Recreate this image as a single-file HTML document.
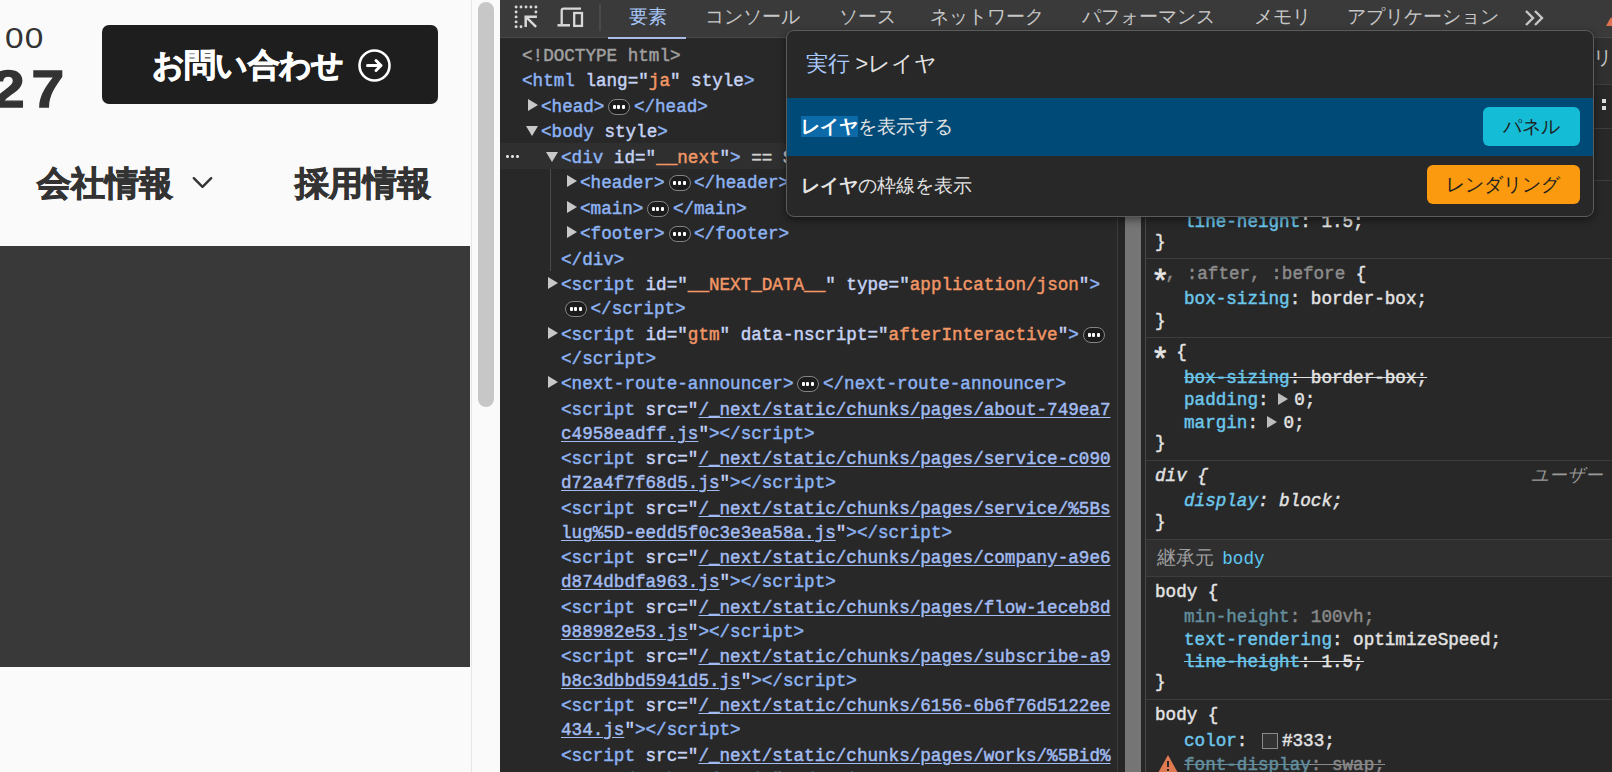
<!DOCTYPE html>
<html lang="ja">
<head>
<meta charset="utf-8">
<style>
*{margin:0;padding:0;box-sizing:border-box}
html,body{width:1612px;height:772px;overflow:hidden;background:#282828;font-family:"Liberation Sans",sans-serif}
.abs{position:absolute}
#page{position:absolute;left:0;top:0;width:471px;height:772px;background:#fafafa;overflow:hidden}
#n00{position:absolute;left:5px;top:21px;font-size:29px;line-height:34px;color:#333;transform:scaleX(1.15);transform-origin:0 0;letter-spacing:1px}
#n27{position:absolute;left:-8px;top:61px;font-size:51px;line-height:58px;color:#333;font-weight:bold;transform:scaleX(1.15);transform-origin:0 0;letter-spacing:6px;-webkit-text-stroke:1.3px #333}
#btn{position:absolute;left:102px;top:25px;width:336px;height:79px;background:#1e1e1e;border-radius:7px}
#btntxt{position:absolute;left:50px;top:20px;font-size:31.5px;letter-spacing:-0.8px;line-height:40px;color:#fff;font-weight:bold;white-space:nowrap;-webkit-text-stroke:0.9px #fff}
#btnico{position:absolute;left:255.5px;top:24px;width:33px;height:33px}
.nav{position:absolute;top:162px;font-size:34px;line-height:42px;color:#333;font-weight:bold;white-space:nowrap;-webkit-text-stroke:0.9px #333}
#dark{position:absolute;left:0;top:246px;width:470px;height:421px;background:#393939}
#track{position:absolute;left:471px;top:0;width:29px;height:772px;background:#fafafa;border-left:1px solid #e6e6e6}
#thumb{position:absolute;left:478px;top:2px;width:16px;height:405px;background:#c7c7c7;border-radius:8px}
#dt{position:absolute;left:500px;top:0;width:1112px;height:772px;background:#282828;overflow:hidden}
#tb{position:absolute;left:500px;top:0;width:1112px;height:38px;background:#3a3a3a;border-bottom:1.5px solid #474747}
.tab{position:absolute;top:4px;font-size:19px;line-height:26px;color:#c7c7c7;white-space:nowrap}
#seltab{position:absolute;left:608px;top:36.5px;width:78px;height:2px;background:#a9bde6}
.row{position:absolute;height:24px;font-family:"Liberation Mono",monospace;font-size:17.63px;line-height:24px;white-space:pre;color:#e3e3e3;-webkit-text-stroke-width:0.45px}
.t{color:#8db3f3}
.a{color:#c6d3f4}
.v{color:#f29766}
.lk{color:#a2bcf2;text-decoration:underline;text-underline-offset:2px}
.g{color:#a0a0a0}.eq{color:#d0d0d0}
.p{color:#6cc6ea}
.w{color:#e3e3e3}
.dim{color:#8c8c8c}
.pd{color:#638f9e}
.wd{color:#8a8a8a}
.st{text-decoration:line-through}
.st span{text-decoration:line-through}
.it{font-style:italic}.ast{display:inline-block;transform:translate(0px,9.5px) scale(1.75)}
.sp{display:inline-block;width:15px}.sp2{display:inline-block;width:24px}
.bd{display:inline-block;position:relative;top:3.7px;width:22px;height:16px;border:1px solid #858585;border-radius:8px;background:#1c1c1c;vertical-align:top;margin:0 3.5px 0 4px}
.bd i{position:absolute;top:5.5px;width:3px;height:3.5px;background:#fff;border-radius:1px}
.bd i:nth-child(1){left:3.8px}.bd i:nth-child(2){left:8px}.bd i:nth-child(3){left:13px}
.tri-r{position:absolute;width:0;height:0;border-top:6px solid transparent;border-bottom:6px solid transparent;border-left:10px solid #c8c8c8}
.tri-d{position:absolute;width:0;height:0;border-left:6px solid transparent;border-right:6px solid transparent;border-top:10px solid #c8c8c8}
#selrow{position:absolute;left:500px;top:143px;width:617px;height:26px;background:#2f2f2f}
#guide{position:absolute;left:550px;top:169px;width:1px;height:102px;background:#4a4a4a}
#vsb{position:absolute;left:1117px;top:38px;width:29px;height:734px;background:#262626;border-left:1px solid #3c3c3c;border-right:1px solid #484848}
#vthumb{position:absolute;left:1125px;top:38px;width:16px;height:734px;background:#757575}
#sty{position:absolute;left:1146px;top:38px;width:466px;height:734px;background:#282828}
.sep{position:absolute;left:1146px;width:466px;height:1px;background:#3d3d3d}
#inh{position:absolute;left:1146px;top:540px;width:466px;height:36px;background:#2f2f2f}
#menu{position:absolute;left:785.5px;top:30px;width:808.5px;height:187px;background:#282828;border:1.5px solid #5c5c5c;border-radius:8px;box-shadow:0 3px 8px rgba(0,0,0,.45);overflow:hidden}
#mhead{position:absolute;left:19px;top:18px;font-size:21.6px;line-height:30px;color:#e3e3e3;white-space:nowrap}
#msel{position:absolute;left:0;top:67px;width:806px;height:58px;background:#004a77}
.mtxt{position:absolute;left:14px;font-size:19px;line-height:26px;color:#e3e3e3;white-space:nowrap}
.hl{background:#0d6aa8;font-weight:bold;color:#fff}
.badge{position:absolute;font-size:19px;line-height:39px;height:39px;border-radius:6px;text-align:center;color:#1f1f1f;white-space:nowrap}
</style>
</head>
<body>
<div id="page">
  <div id="n00">00</div>
  <div id="n27">27</div>
  <div id="btn">
    <div id="btntxt">お問い合わせ</div>
    <svg id="btnico" viewBox="0 0 33 33"><circle cx="16.5" cy="16.5" r="15" fill="none" stroke="#fff" stroke-width="2.6"/><path d="M9.5 16.5h13.5M18 11.5l5 5-5 5" fill="none" stroke="#fff" stroke-width="3" stroke-linecap="round" stroke-linejoin="round"/></svg>
  </div>
  <div class="nav" style="left:37px">会社情報</div>
  <svg class="abs" style="left:192px;top:176px" width="21" height="14" viewBox="0 0 21 14"><path d="M1.8 2.2l8.7 8.7 8.7-8.7" fill="none" stroke="#333" stroke-width="2.4" stroke-linecap="round" stroke-linejoin="round"/></svg>
  <div class="nav" style="left:295px">採用情報</div>
  <div id="dark"></div>
</div>
<div id="track"></div>
<div id="thumb"></div>
<div id="dt"></div>
<div id="tb"></div>
<svg class="abs" style="left:508px;top:0px" width="84" height="36" viewBox="0 0 84 36">
  <g fill="#d8d8d8"><circle cx="8.1" cy="7" r="1.45"/><circle cx="13" cy="7" r="1.45"/><circle cx="18" cy="7" r="1.45"/><circle cx="22.9" cy="7" r="1.45"/><circle cx="27.9" cy="7" r="1.45"/><circle cx="8.1" cy="12" r="1.45"/><circle cx="8.1" cy="16.9" r="1.45"/><circle cx="8.1" cy="21.9" r="1.45"/><circle cx="8.1" cy="26.8" r="1.45"/><circle cx="13" cy="26.8" r="1.45"/><circle cx="27.9" cy="12" r="1.45"/></g>
  <path d="M28.9 16.7H17.7V27.1M17.7 16.7L28.1 26.8" stroke="#d8d8d8" stroke-width="2.5" fill="none"/>
  <path d="M53.7 24.5V10.6a2 2 0 0 1 2-2H73" stroke="#d8d8d8" stroke-width="2.3" fill="none"/>
  <path d="M49.5 25.3H62" stroke="#d8d8d8" stroke-width="2.5" fill="none"/>
  <rect x="66.2" y="13" width="7.8" height="12.9" stroke="#d8d8d8" stroke-width="2.3" fill="none"/>
</svg>
<div class="abs" style="left:599px;top:4px;width:2px;height:27px;background:#4a4a4a"></div>
<div class="tab" style="left:629px;color:#a8c7fa">要素</div>
<div class="tab" style="left:705px">コンソール</div>
<div class="tab" style="left:839px">ソース</div>
<div class="tab" style="left:930px">ネットワーク</div>
<div class="tab" style="left:1082px">パフォーマンス</div>
<div class="tab" style="left:1254px">メモリ</div>
<div class="tab" style="left:1347px">アプリケーション</div>
<svg class="abs" style="left:1524px;top:9px" width="22" height="18" viewBox="0 0 22 18"><path d="M2 2l7 7-7 7M11 2l7 7-7 7" stroke="#c7c7c7" stroke-width="2.4" fill="none"/></svg>
<div id="seltab"></div>
<div id="selrow"></div>
<div class="abs" style="left:505px;top:155px;width:14px;height:3px;background-image:radial-gradient(circle,#ddd 1.3px,transparent 1.6px);background-size:5px 3px"></div>
<div id="guide"></div>
<div class="row" style="top:44px;left:522px"><span class="g">&lt;!DOCTYPE html&gt;</span></div>
<div class="row" style="top:69px;left:522px"><span class="t">&lt;html</span><span class="a"> lang="</span><span class="v">ja</span><span class="a">" style</span><span class="t">&gt;</span></div>
<div class="row" style="top:95px;left:541px"><span class="t">&lt;head&gt;</span><span class="bd"><i></i><i></i><i></i></span><span class="t">&lt;/head&gt;</span></div><div class="tri-r" style="top:99px;left:528px"></div>
<div class="row" style="top:120px;left:541px"><span class="t">&lt;body</span><span class="a"> style</span><span class="t">&gt;</span></div><div class="tri-d" style="top:126px;left:526px"></div>
<div class="row" style="top:146px;left:561px"><span class="t">&lt;div</span><span class="a"> id="</span><span class="v">__next</span><span class="a">"</span><span class="t">&gt;</span><span class="eq"> == $0</span></div><div class="tri-d" style="top:152px;left:546px"></div>
<div class="row" style="top:171px;left:580px"><span class="t">&lt;header&gt;</span><span class="bd"><i></i><i></i><i></i></span><span class="t">&lt;/header&gt;</span></div><div class="tri-r" style="top:175px;left:567px"></div>
<div class="row" style="top:197px;left:580px"><span class="t">&lt;main&gt;</span><span class="bd"><i></i><i></i><i></i></span><span class="t">&lt;/main&gt;</span></div><div class="tri-r" style="top:201px;left:567px"></div>
<div class="row" style="top:222px;left:580px"><span class="t">&lt;footer&gt;</span><span class="bd"><i></i><i></i><i></i></span><span class="t">&lt;/footer&gt;</span></div><div class="tri-r" style="top:226px;left:567px"></div>
<div class="row" style="top:248px;left:561px"><span class="t">&lt;/div&gt;</span></div>
<div class="row" style="top:273px;left:561px"><span class="t">&lt;script</span><span class="a"> id="</span><span class="v">__NEXT_DATA__</span><span class="a">" type="</span><span class="v">application/json</span><span class="a">"</span><span class="t">&gt;</span></div><div class="tri-r" style="top:277px;left:548px"></div>
<div class="row" style="top:297px;left:561px"><span class="bd"><i></i><i></i><i></i></span><span class="t">&lt;/script&gt;</span></div>
<div class="row" style="top:323px;left:561px"><span class="t">&lt;script</span><span class="a"> id="</span><span class="v">gtm</span><span class="a">" data-nscript="</span><span class="v">afterInteractive</span><span class="a">"</span><span class="t">&gt;</span><span class="bd"><i></i><i></i><i></i></span></div><div class="tri-r" style="top:327px;left:548px"></div>
<div class="row" style="top:347px;left:561px"><span class="t">&lt;/script&gt;</span></div>
<div class="row" style="top:372px;left:561px"><span class="t">&lt;next-route-announcer&gt;</span><span class="bd"><i></i><i></i><i></i></span><span class="t">&lt;/next-route-announcer&gt;</span></div><div class="tri-r" style="top:376px;left:548px"></div>
<div class="row" style="top:398px;left:561px"><span class="t">&lt;script</span><span class="a"> src="</span><span class="lk">/_next/static/chunks/pages/about-749ea7</span></div>
<div class="row" style="top:422px;left:561px"><span class="lk">c4958eadff.js</span><span class="a">"</span><span class="t">&gt;&lt;/script&gt;</span></div>
<div class="row" style="top:447px;left:561px"><span class="t">&lt;script</span><span class="a"> src="</span><span class="lk">/_next/static/chunks/pages/service-c090</span></div>
<div class="row" style="top:471px;left:561px"><span class="lk">d72a4f7f68d5.js</span><span class="a">"</span><span class="t">&gt;&lt;/script&gt;</span></div>
<div class="row" style="top:497px;left:561px"><span class="t">&lt;script</span><span class="a"> src="</span><span class="lk">/_next/static/chunks/pages/service/%5Bs</span></div>
<div class="row" style="top:521px;left:561px"><span class="lk">lug%5D-eedd5f0c3e3ea58a.js</span><span class="a">"</span><span class="t">&gt;&lt;/script&gt;</span></div>
<div class="row" style="top:546px;left:561px"><span class="t">&lt;script</span><span class="a"> src="</span><span class="lk">/_next/static/chunks/pages/company-a9e6</span></div>
<div class="row" style="top:570px;left:561px"><span class="lk">d874dbdfa963.js</span><span class="a">"</span><span class="t">&gt;&lt;/script&gt;</span></div>
<div class="row" style="top:596px;left:561px"><span class="t">&lt;script</span><span class="a"> src="</span><span class="lk">/_next/static/chunks/pages/flow-1eceb8d</span></div>
<div class="row" style="top:620px;left:561px"><span class="lk">988982e53.js</span><span class="a">"</span><span class="t">&gt;&lt;/script&gt;</span></div>
<div class="row" style="top:645px;left:561px"><span class="t">&lt;script</span><span class="a"> src="</span><span class="lk">/_next/static/chunks/pages/subscribe-a9</span></div>
<div class="row" style="top:669px;left:561px"><span class="lk">b8c3dbbd5941d5.js</span><span class="a">"</span><span class="t">&gt;&lt;/script&gt;</span></div>
<div class="row" style="top:694px;left:561px"><span class="t">&lt;script</span><span class="a"> src="</span><span class="lk">/_next/static/chunks/6156-6b6f76d5122ee</span></div>
<div class="row" style="top:718px;left:561px"><span class="lk">434.js</span><span class="a">"</span><span class="t">&gt;&lt;/script&gt;</span></div>
<div class="row" style="top:744px;left:561px"><span class="t">&lt;script</span><span class="a"> src="</span><span class="lk">/_next/static/chunks/pages/works/%5Bid%</span></div>
<div class="row" style="top:768px;left:561px"><span class="lk">5D-0e1d2c3b4a5f6e.js</span><span class="a">"</span><span class="t">&gt;&lt;/script&gt;</span></div>
<div id="vsb"></div>
<div id="vthumb"></div>
<div id="sty"></div>
<div class="abs" style="left:1146px;top:38px;width:466px;height:47px;background:#303030;border-bottom:1px solid #3d3d3d"></div>
<div class="abs" style="left:1593px;top:45px;font-size:19px;line-height:26px;color:#c7c7c7;white-space:nowrap">リス</div>
<div class="abs" style="left:1146px;top:128px;width:466px;height:1px;background:#3d3d3d"></div>
<div class="abs" style="left:1146px;top:180px;width:466px;height:1px;background:#3d3d3d"></div>
<div class="abs" style="left:1602px;top:99px;width:4px;height:4px;background:#ddd"></div>
<div class="abs" style="left:1602px;top:106px;width:4px;height:4px;background:#ddd"></div>
<div class="abs" style="left:1606px;top:17px;width:0;height:0;border-left:5px solid transparent;border-right:5px solid transparent;border-bottom:9px solid #e0734f"></div>
<div class="sep" style="top:258px"></div>
<div class="sep" style="top:337px"></div>
<div class="sep" style="top:460px"></div>
<div class="sep" style="top:539px"></div>
<div id="inh"></div>
<div class="sep" style="top:576px"></div>
<div class="sep" style="top:699px"></div>
<div class="abs" style="left:1157px;top:545px;font-size:19px;line-height:26px;color:#a0a0a0;white-space:nowrap">継承元 <span style="margin-left:3px;font-family:'Liberation Mono',monospace;font-size:17.63px;color:#5cc8f2">body</span></div>
<div class="abs" style="left:1531px;top:462px;font-size:17.6px;line-height:26px;color:#9a9a9a;font-style:italic">ユーザー</div>
<div class="row " style="top:210px;left:1184px"><span class="p">line-height</span><span class="w">: 1.5;</span></div>
<div class="row " style="top:229.5px;left:1155px"><span class="w">}</span></div>
<div class="row " style="top:262px;left:1155px"><span class="w ast">*</span><span class="dim">, :after, :before</span><span class="w"> {</span></div>
<div class="row " style="top:287px;left:1184px"><span class="p">box-sizing</span><span class="w">: border-box;</span></div>
<div class="row " style="top:308.5px;left:1155px"><span class="w">}</span></div>
<div class="row " style="top:340px;left:1155px"><span class="w ast">*</span><span class="w"> {</span></div>
<div class="row st" style="top:366px;left:1184px"><span class="p">box-sizing</span><span class="w">: border-box;</span></div>
<div class="row " style="top:388px;left:1184px"><span class="p">padding</span><span class="w">: </span><span class="sp"></span><span class="w">0;</span></div>
<div class="row " style="top:411px;left:1184px"><span class="p">margin</span><span class="w">: </span><span class="sp"></span><span class="w">0;</span></div>
<div class="row " style="top:430.5px;left:1155px"><span class="w">}</span></div>
<div class="row it" style="top:464px;left:1155px"><span class="w">div {</span></div>
<div class="row it" style="top:489px;left:1184px"><span class="p">display</span><span class="w">: block;</span></div>
<div class="row " style="top:509.5px;left:1155px"><span class="w">}</span></div>
<div class="row " style="top:580px;left:1155px"><span class="w">body {</span></div>
<div class="row " style="top:605px;left:1184px"><span class="pd">min-height</span><span class="wd">: 100vh;</span></div>
<div class="row " style="top:628px;left:1184px"><span class="p">text-rendering</span><span class="w">: optimizeSpeed;</span></div>
<div class="row st" style="top:650px;left:1184px"><span class="p">line-height</span><span class="w">: 1.5;</span></div>
<div class="row " style="top:669.5px;left:1155px"><span class="w">}</span></div>
<div class="row " style="top:703px;left:1155px"><span class="w">body {</span></div>
<div class="row " style="top:729px;left:1184px"><span class="p">color</span><span class="w">: </span><span class="sp2"></span><span class="w">#333;</span></div>
<div class="row st" style="top:753px;left:1184px"><span class="pd">font-display</span><span class="wd">: swap;</span></div>
<div class="abs" style="left:1278px;top:393px;width:0;height:0;border-top:6px solid transparent;border-bottom:6px solid transparent;border-left:10px solid #bdbdbd"></div>
<div class="abs" style="left:1267px;top:416px;width:0;height:0;border-top:6px solid transparent;border-bottom:6px solid transparent;border-left:10px solid #bdbdbd"></div>
<div class="abs" style="left:1262px;top:733px;width:16px;height:16px;background:#333;border:1px solid #8a8a8a"></div>
<svg class="abs" style="left:1157px;top:754px" width="22" height="20" viewBox="0 0 22 20"><path d="M11 1L21 19H1z" fill="#e07a52"/><path d="M11 7v6M11 15v2" stroke="#282828" stroke-width="2"/></svg>
<div id="menu">
  <div id="mhead"><span style="color:#a8c7fa">実行</span> &gt;レイヤ</div>
  <div id="msel"></div>
  <div class="mtxt" style="top:83px"><span class="hl">レイヤ</span>を表示する</div>
  <div class="mtxt" style="top:142px"><b>レイヤ</b>の枠線を表示</div>
  <div class="badge" style="left:696px;top:76px;width:97px;background:#15bcd6">パネル</div>
  <div class="badge" style="left:640px;top:134px;width:153px;background:#fb9a0e">レンダリング</div>
</div>
</body>
</html>
